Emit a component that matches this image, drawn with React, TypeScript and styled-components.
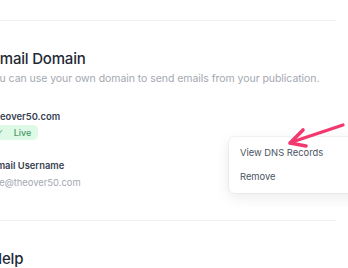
import React from 'react';
import styled, { createGlobalStyle } from 'styled-components';

const GlobalStyle = createGlobalStyle`
  html, body {
    margin: 0;
    padding: 0;
    background: #ffffff;
    font-family: Inter, "Noto Sans", sans-serif;
    -webkit-font-smoothing: antialiased;
  }
`;

const Page = styled.div`
  position: relative;
  width: 348px;
  height: 268px;
  overflow: hidden;
  padding-top: 20px;
  box-sizing: border-box;
`;

const Content = styled.div`
  margin-left: -9px;
  width: 345px;
`;

const Divider = styled.hr`
  margin: 0;
  border: none;
  border-top: 1px solid #eef0f3;
`;

const Section = styled.section`
  padding: 27px 0 29px;
`;

const Title = styled.h2`
  margin: 0;
  font-size: 15px;
  line-height: 22px;
  font-weight: 500;
  letter-spacing: -0.2px;
  color: #1f2937;
`;

const Subtitle = styled.p`
  margin: 0;
  text-indent: -4px;
  font-size: 10.5px;
  line-height: 18px;
  letter-spacing: -0.05px;
  color: #a3a8b1;
  white-space: nowrap;
`;

const Field = styled.div<{ $top: number }>`
  margin-top: ${p => p.$top}px;
  display: flex;
  flex-direction: column;
  align-items: flex-start;
`;

const Label = styled.div`
  font-size: 9.4px;
  line-height: 17px;
  font-weight: 600;
  color: #374151;
`;

const Muted = styled.div`
  font-size: 9.4px;
  line-height: 17px;
  color: #a3a8b1;
`;

const Badge = styled.span`
  display: inline-flex;
  align-items: center;
  gap: 10px;
  height: 15px;
  padding: 0 7px 0 6px;
  border-radius: 5px;
  background: #dff9e7;
  color: #4a9a66;
  font-size: 9px;
  font-weight: 500;
`;

const Check = styled.span`
  font-family: "DejaVu Sans", sans-serif;
  font-size: 8px;
`;

const Menu = styled.div`
  position: absolute;
  left: 229px;
  top: 137px;
  width: 150px;
  padding: 3px 0 5px;
  background: #ffffff;
  border-radius: 6px;
  box-shadow: 0 4px 14px rgba(17, 24, 39, 0.09), 0 0 0 1px rgba(17, 24, 39, 0.04);
`;

const MenuItem = styled.div`
  padding: 0 11px;
  height: 24px;
  display: flex;
  align-items: center;
  font-size: 9.4px;
  color: #4b5563;
`;

const Pointer = styled.svg`
  position: absolute;
  left: 284px;
  top: 118px;
`;

export default function App() {
  return (
    <>
      <GlobalStyle />
      <Page>
        <Content>
          <Divider />
          <Section>
            <Title>Email Domain</Title>
            <Subtitle>You can use your own domain to send emails from your publication.</Subtitle>
            <Field $top={20}>
              <Label>theover50.com</Label>
              <Badge>
                <Check>✓</Check>
                <span>Live</span>
              </Badge>
            </Field>
            <Field $top={17}>
              <Label>Email Username</Label>
              <Muted>me@theover50.com</Muted>
            </Field>
          </Section>
          <Divider />
          <Section>
            <Title>Help</Title>
          </Section>
        </Content>

        <Menu>
          <MenuItem>View DNS Records</MenuItem>
          <MenuItem>Remove</MenuItem>
        </Menu>

        <Pointer width="64" height="34" viewBox="0 0 64 34">
          <path d="M59 7 L8 24" stroke="#f2386e" strokeWidth="3.2" strokeLinecap="round" fill="none" />
          <path d="M6 25 L19 12 M6 25 L22 28" stroke="#f2386e" strokeWidth="3.6" strokeLinecap="round" strokeLinejoin="round" fill="none" />
        </Pointer>
      </Page>
    </>
  );
}
